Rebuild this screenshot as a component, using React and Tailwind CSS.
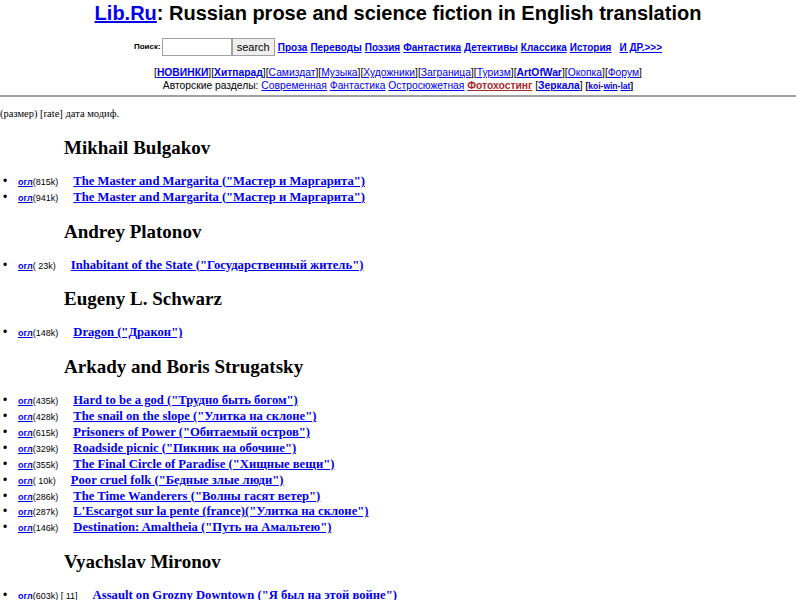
import React from "react";

const sections = [
  {
    author: "Mikhail Bulgakov",
    books: [
      { size: "(815k)", title: 'The Master and Margarita ("Мастер и Маргарита")' },
      { size: "(941k)", title: 'The Master and Margarita ("Мастер и Маргарита")' },
    ],
  },
  {
    author: "Andrey Platonov",
    books: [{ size: "( 23k)", title: 'Inhabitant of the State ("Государственный житель")' }],
  },
  {
    author: "Eugeny L. Schwarz",
    books: [{ size: "(148k)", title: 'Dragon ("Дракон")' }],
  },
  {
    author: "Arkady and Boris Strugatsky",
    books: [
      { size: "(435k)", title: 'Hard to be a god ("Трудно быть богом")' },
      { size: "(428k)", title: 'The snail on the slope ("Улитка на склоне")' },
      { size: "(615k)", title: 'Prisoners of Power ("Обитаемый остров")' },
      { size: "(329k)", title: 'Roadside picnic ("Пикник на обочине")' },
      { size: "(355k)", title: 'The Final Circle of Paradise ("Хищные вещи")' },
      { size: "( 10k)", title: 'Poor cruel folk ("Бедные злые люди")' },
      { size: "(286k)", title: 'The Time Wanderers ("Волны гасят ветер")' },
      { size: "(287k)", title: 'L\'Escargot sur la pente (france)("Улитка на склоне")' },
      { size: "(146k)", title: 'Destination: Amaltheia ("Путь на Амальтею")' },
    ],
  },
  {
    author: "Vyachslav Mironov",
    books: [{ size: "(603k) [ 11]", title: 'Assault on Grozny Downtown ("Я был на этой войне")' }],
  },
];

function Bracket({ children, bold }) {
  return (
    <span>
      [<a href="#" className={`underline text-[#0000ee] ${bold ? "font-bold" : ""}`}>{children}</a>]
    </span>
  );
}

function Book({ size, title }) {
  return (
    <li className="flex items-baseline h-[15.875px] whitespace-nowrap">
      <span className="w-[18px] pl-[3px] text-[12px] leading-none font-['Liberation_Sans',sans-serif]">•</span>
      <a href="#" className="underline text-[#0000ee] font-bold text-[9px] font-['Liberation_Sans',sans-serif]">огл</a>
      <span className="text-[9px] font-['Liberation_Sans',sans-serif] whitespace-pre">{size}</span>
      <a href="#" className="ml-[15px] underline text-[#0000ee] font-bold text-[12.65px] font-['Liberation_Serif',serif]">
        {title}
      </a>
    </li>
  );
}

export default function App() {
  return (
    <div className="w-[796px] h-[600px] overflow-hidden bg-white text-black font-['Liberation_Serif',serif]">
      <div className="flex flex-col items-center font-['Liberation_Sans',sans-serif]">
        <h1 className="text-[20px] font-bold leading-[24px] mt-[1px]">
          <a href="#" className="underline text-[#0000ee]">Lib.Ru</a>: Russian prose and science fiction in English translation
        </h1>
        <div className="flex items-center mt-[13px] text-[10px]">
          <span className="text-[8px] font-bold mr-[1px]">Поиск:</span>
          <input className="w-[70px] h-[18px] border border-[#a0a0a0] bg-white" />
          <button className="h-[18px] px-[4px] border border-[#a0a0a0] bg-[#efefef] text-[11px] leading-none">search</button>
          <span className="ml-[3px] font-bold flex gap-[3px]">
            {["Проза", "Переводы", "Поэзия", "Фантастика", "Детективы", "Классика", "История"].map((l) => (
              <a key={l} href="#" className="underline text-[#0000ee]">{l}</a>
            ))}
            <a href="#" className="underline text-[#0000ee] ml-[5px]">И ДР.&gt;&gt;&gt;</a>
          </span>
        </div>
        <div className="mt-[10px] text-[10.3px] leading-[13px]">
          <Bracket bold>НОВИНКИ</Bracket>
          <Bracket bold>Хитпарад</Bracket>
          <Bracket>Самиздат</Bracket>
          <Bracket>Музыка</Bracket>
          <Bracket>Художники</Bracket>
          <Bracket>Заграница</Bracket>
          <Bracket>Туризм</Bracket>
          <Bracket bold>ArtOfWar</Bracket>
          <Bracket>Окопка</Bracket>
          <Bracket>Форум</Bracket>
        </div>
        <div className="text-[10.3px] leading-[13px]">
          Авторские разделы:{" "}
          <a href="#" className="underline text-[#0000ee]">Современная</a>{" "}
          <a href="#" className="underline text-[#0000ee]">Фантастика</a>{" "}
          <a href="#" className="underline text-[#0000ee]">Остросюжетная</a>{" "}
          <a href="#" className="underline text-[#a52a2a] font-bold">Фотохостинг</a>{" "}
          <Bracket bold>Зеркала</Bracket>{" "}
          <span className="text-[8.5px] font-bold">
            [<a href="#" className="underline text-[#0000ee]">koi</a>-<a href="#" className="underline text-[#0000ee]">win</a>-<a href="#" className="underline text-[#0000ee]">lat</a>]
          </span>
        </div>
      </div>
      <hr className="mt-[2px] border-t-[2px] border-[#a0a0a0]" />
      <div className="mt-[9px] text-[10.5px]">(размер) [rate] дата модиф.</div>
      {sections.map((s, i) => (
        <section key={s.author}>
          <h2 className={`ml-[64px] ${i === 0 ? "mt-[14px]" : "mt-[16px]"} mb-[12px] text-[19px] font-bold leading-[24px]`}>
            {s.author}
          </h2>
          <ul>
            {s.books.map((b, j) => (
              <Book key={j} {...b} />
            ))}
          </ul>
        </section>
      ))}
    </div>
  );
}
